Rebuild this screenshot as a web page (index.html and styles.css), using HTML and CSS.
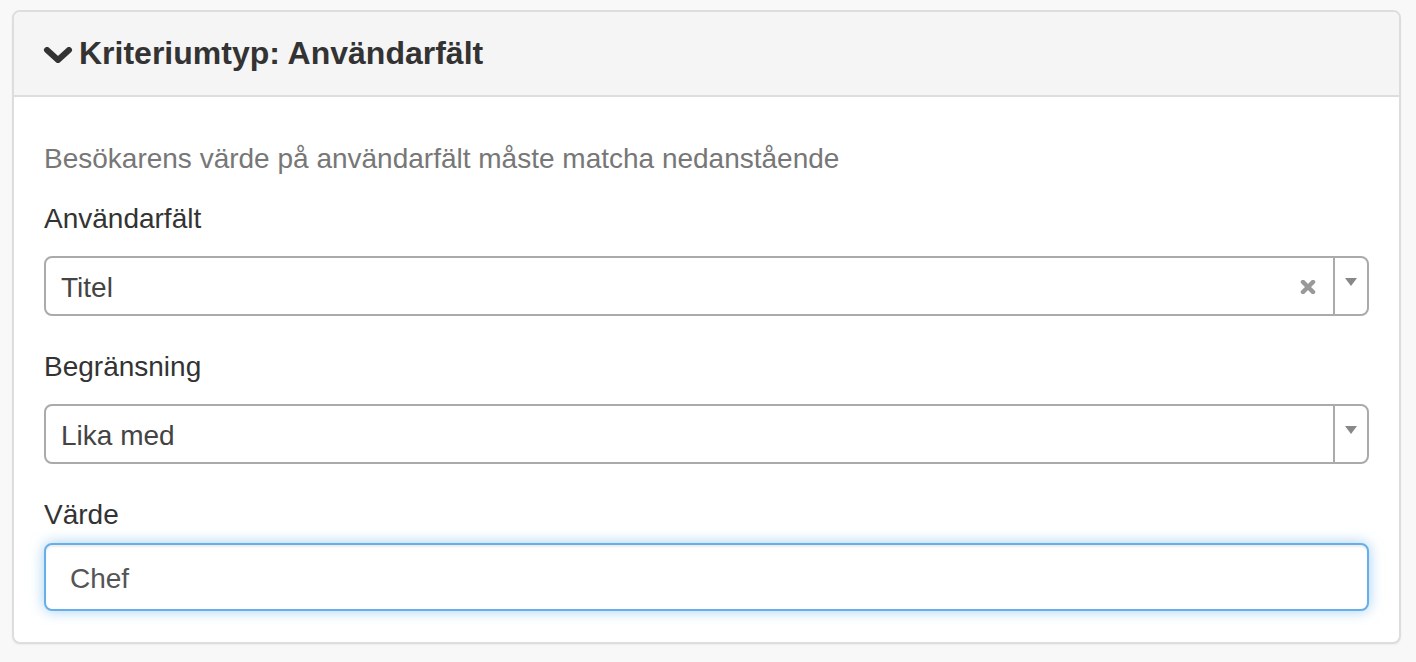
FILE: index.html
```html
<!DOCTYPE html>
<html lang="sv">

<head>
    <meta charset="UTF-8">
    <meta name="viewport" content="width=device-width, initial-scale=1.0">
    <title>Kriteriumtyp</title>
    <link rel="stylesheet" href="styles.css">
</head>

<body>
    <div class="panel">
        <div class="panel-heading">
            <svg class="chevron" width="30" height="16" viewBox="0 0 30 16">
                <polyline points="4,3 15,13 26,3" fill="none" stroke="#333" stroke-width="6" stroke-linecap="round" stroke-linejoin="round" />
            </svg>
            <span class="title">Kriteriumtyp: Användarfält</span>
        </div>

        <div class="panel-body">
            <p class="help">Besökarens värde på användarfält måste matcha nedanstående</p>

            <div class="form-group">
                <label class="label">Användarfält</label>
                <div class="select">
                    <span class="select-text">Titel</span>
                    <!-- clear button -->
                    <svg class="select-clear" width="16" height="14" viewBox="0 0 16 14">
                        <path d="M3 2 L13 12 M13 2 L3 12" stroke="#999" stroke-width="4.5" stroke-linecap="round" />
                    </svg>
                    <span class="select-arrow"><span class="triangle"></span></span>
                </div>
            </div>

            <div class="form-group">
                <label class="label">Begränsning</label>
                <div class="select">
                    <span class="select-text">Lika med</span>
                    <span class="select-arrow"><span class="triangle"></span></span>
                </div>
            </div>

            <div class="form-group last">
                <label class="label label-input">Värde</label>
                <input class="input" type="text" value="Chef">
            </div>
        </div>
    </div>
</body>

</html>
```

FILE: styles.css
```css
* {
    box-sizing: border-box;
}

body {
    margin: 0;
    padding: 10px 15px 20px 12px;
    background-color: #f8f8f8;
    font-family: "Liberation Sans", Arial, sans-serif;
    font-size: 28px;
    color: #333;
}

.panel {
    background-color: white;
    border: 2px solid #dddddd;
    border-radius: 8px;
    box-shadow: 0 1px 2px rgba(0, 0, 0, 0.05);
}

.panel-heading {
    height: 85px;
    display: flex;
    align-items: center;
    padding-left: 29px;
    background-color: #f5f5f5;
    border-bottom: 2px solid #dddddd;
    border-radius: 6px 6px 0 0;
}

.chevron {
    margin-right: 6px;
    margin-top: 2px;
}

.title {
    font-size: 32px;
    font-weight: bold;
    color: #333;
}

.panel-body {
    padding: 42px 30px 31px 30px;
}

.help {
    margin: 0 0 18px 0;
    line-height: 40px;
    color: #777;
}

.form-group {
    margin-bottom: 29px;
}

.form-group.last {
    margin-bottom: 0;
}

.label {
    display: block;
    line-height: 40px;
    padding-top: 2px;
    margin-bottom: 17px;
}

.label-input {
    margin-bottom: 8px;
}

.select {
    display: flex;
    align-items: center;
    height: 60px;
    border: 2px solid #aaaaaa;
    border-radius: 8px;
    background-color: white;
}

.select-text {
    flex: 1;
    padding-left: 15px;
    padding-top: 3px;
    color: #444;
}

.select-clear {
    margin-right: 17px;
    margin-top: 2px;
}

.select-arrow {
    display: flex;
    justify-content: center;
    align-items: center;
    width: 34px;
    height: 100%;
    border-left: 2px solid #aaaaaa;
    padding-bottom: 8px;
}

.triangle {
    width: 0;
    height: 0;
    border-left: 6px solid transparent;
    border-right: 6px solid transparent;
    border-top: 8px solid #888;
}

.input {
    display: block;
    width: 100%;
    height: 68px;
    padding: 3px 24px 0 24px;
    font-family: "Liberation Sans", Arial, sans-serif;
    font-size: 28px;
    color: #555;
    border: 2px solid #66afe9;
    border-radius: 8px;
    outline: none;
    box-shadow: inset 0 2px 2px rgba(0, 0, 0, 0.075), 0 0 14px rgba(102, 175, 233, 0.6);
}
```
